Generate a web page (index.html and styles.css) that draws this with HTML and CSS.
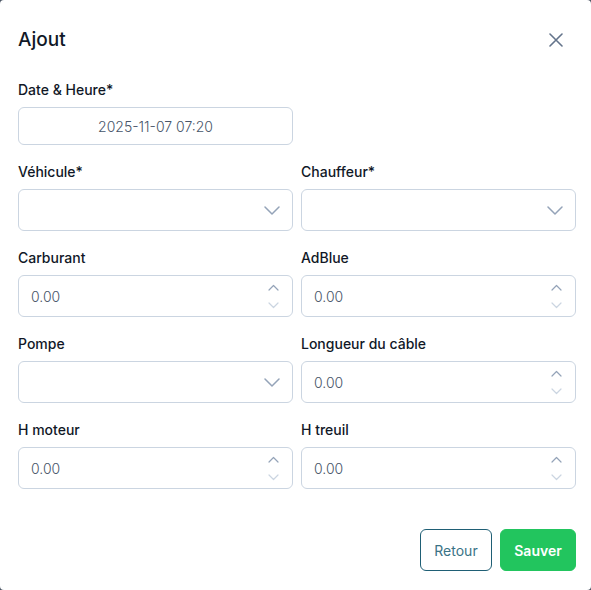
FILE: index.html
```html
<!DOCTYPE html>
<html lang="fr">
<head>
<meta charset="utf-8">
<title>Ajout</title>
<link rel="stylesheet" href="styles.css">
</head>
<body>
<div class="modal">
  <div class="header">
    <h2 class="title">Ajout</h2>
    <button class="close" aria-label="Fermer">
      <svg width="14" height="14" viewBox="0 0 14 14"><path d="M1 1L13 13M13 1L1 13" stroke="#64748b" stroke-width="1.6" stroke-linecap="round"/></svg>
    </button>
  </div>

  <div class="field date-field">
    <label class="label">Date &amp; Heure*</label>
    <div class="input date">2025-11-07 07:20</div>
  </div>

  <div class="grid">
    <div class="field">
      <label class="label">Véhicule*</label>
      <div class="input select">
        <svg class="chev" width="16" height="9" viewBox="0 0 16 9"><path d="M1 1L8 8L15 1" fill="none" stroke="#94a3b8" stroke-width="1.5" stroke-linecap="round" stroke-linejoin="round"/></svg>
      </div>
    </div>
    <div class="field">
      <label class="label">Chauffeur*</label>
      <div class="input select">
        <svg class="chev" width="16" height="9" viewBox="0 0 16 9"><path d="M1 1L8 8L15 1" fill="none" stroke="#94a3b8" stroke-width="1.5" stroke-linecap="round" stroke-linejoin="round"/></svg>
      </div>
    </div>

    <div class="field">
      <label class="label">Carburant</label>
      <div class="input number"><span class="val">0.00</span>
        <span class="spin"><svg width="11" height="7" viewBox="0 0 11 7"><path d="M1 6L5.5 1.5L10 6" fill="none" stroke="#94a3b8" stroke-width="1.2" stroke-linecap="round" stroke-linejoin="round"/></svg><svg width="11" height="7" viewBox="0 0 11 7"><path d="M1 1L5.5 5.5L10 1" fill="none" stroke="#cbd5e1" stroke-width="1.2" stroke-linecap="round" stroke-linejoin="round"/></svg></span>
      </div>
    </div>
    <div class="field">
      <label class="label">AdBlue</label>
      <div class="input number"><span class="val">0.00</span>
        <span class="spin"><svg width="11" height="7" viewBox="0 0 11 7"><path d="M1 6L5.5 1.5L10 6" fill="none" stroke="#94a3b8" stroke-width="1.2" stroke-linecap="round" stroke-linejoin="round"/></svg><svg width="11" height="7" viewBox="0 0 11 7"><path d="M1 1L5.5 5.5L10 1" fill="none" stroke="#cbd5e1" stroke-width="1.2" stroke-linecap="round" stroke-linejoin="round"/></svg></span>
      </div>
    </div>

    <div class="field">
      <label class="label">Pompe</label>
      <div class="input select">
        <svg class="chev" width="16" height="9" viewBox="0 0 16 9"><path d="M1 1L8 8L15 1" fill="none" stroke="#94a3b8" stroke-width="1.5" stroke-linecap="round" stroke-linejoin="round"/></svg>
      </div>
    </div>
    <div class="field">
      <label class="label">Longueur du câble</label>
      <div class="input number"><span class="val">0.00</span>
        <span class="spin"><svg width="11" height="7" viewBox="0 0 11 7"><path d="M1 6L5.5 1.5L10 6" fill="none" stroke="#94a3b8" stroke-width="1.2" stroke-linecap="round" stroke-linejoin="round"/></svg><svg width="11" height="7" viewBox="0 0 11 7"><path d="M1 1L5.5 5.5L10 1" fill="none" stroke="#cbd5e1" stroke-width="1.2" stroke-linecap="round" stroke-linejoin="round"/></svg></span>
      </div>
    </div>

    <div class="field">
      <label class="label">H moteur</label>
      <div class="input number"><span class="val">0.00</span>
        <span class="spin"><svg width="11" height="7" viewBox="0 0 11 7"><path d="M1 6L5.5 1.5L10 6" fill="none" stroke="#94a3b8" stroke-width="1.2" stroke-linecap="round" stroke-linejoin="round"/></svg><svg width="11" height="7" viewBox="0 0 11 7"><path d="M1 1L5.5 5.5L10 1" fill="none" stroke="#cbd5e1" stroke-width="1.2" stroke-linecap="round" stroke-linejoin="round"/></svg></span>
      </div>
    </div>
    <div class="field">
      <label class="label">H treuil</label>
      <div class="input number"><span class="val">0.00</span>
        <span class="spin"><svg width="11" height="7" viewBox="0 0 11 7"><path d="M1 6L5.5 1.5L10 6" fill="none" stroke="#94a3b8" stroke-width="1.2" stroke-linecap="round" stroke-linejoin="round"/></svg><svg width="11" height="7" viewBox="0 0 11 7"><path d="M1 1L5.5 5.5L10 1" fill="none" stroke="#cbd5e1" stroke-width="1.2" stroke-linecap="round" stroke-linejoin="round"/></svg></span>
      </div>
    </div>
  </div>

  <div class="footer">
    <button class="btn btn-back">Retour</button>
    <button class="btn btn-save">Sauver</button>
  </div>
</div>
</body>
</html>
```

FILE: styles.css
```css
html, body {
  margin: 0;
  padding: 0;
  background: #4b5563;
}
body {
  font-family: "Inter", "Lato", "Liberation Sans", sans-serif;
  color: #111827;
}
.modal {
  box-sizing: border-box;
  width: 591px;
  height: 590px;
  background: #fff;
  border-radius: 4px;
  padding: 0 15px 0 18px;
}
.header {
  height: 80px;
  display: flex;
  align-items: center;
  justify-content: space-between;
}
.title {
  margin: 0;
  font-size: 19px;
  font-weight: 500;
  line-height: 26px;
  color: #111827;
}
.close {
  border: 0;
  background: none;
  padding: 0;
  margin-right: 13px;
  width: 14px;
  height: 14px;
  display: flex;
}
.field {
  display: flex;
  flex-direction: column;
}
.label {
  font-size: 14px;
  font-weight: 500;
  line-height: 20px;
  color: #111827;
  margin-bottom: 7px;
}
.date-field {
  width: 275px;
  margin-bottom: 17px;
}
.input {
  box-sizing: border-box;
  height: 42px;
  border: 1px solid #cbd5e1;
  border-radius: 6px;
  background: #fff;
  display: flex;
  align-items: center;
  font-size: 14px;
  font-weight: 300;
  color: #475569;
}
.input.date {
  height: 38px;
  justify-content: center;
}
.grid {
  display: grid;
  grid-template-columns: 275px 275px;
  column-gap: 8px;
  row-gap: 17px;
}
.select {
  justify-content: flex-end;
  padding-right: 12px;
}
.chev {
  display: block;
}
.number {
  justify-content: space-between;
  padding: 0 13px 0 12px;
}
.spin {
  display: flex;
  flex-direction: column;
  gap: 11px;
}
.spin svg {
  display: block;
}
.footer {
  display: flex;
  justify-content: flex-end;
  gap: 8px;
  margin-top: 40px;
}
.btn {
  font-family: inherit;
  height: 42px;
  border-radius: 6px;
  font-size: 14px;
  padding: 0 12px;
  cursor: pointer;
}
.btn-back {
  background: #fff;
  border: 1px solid #1f5f75;
  color: #3a7386;
  font-weight: 400;
  width: 72px;
}
.btn-save {
  background: #22c55e;
  border: 1px solid #22c55e;
  color: #fff;
  font-weight: 600;
  width: 76px;
}
```
